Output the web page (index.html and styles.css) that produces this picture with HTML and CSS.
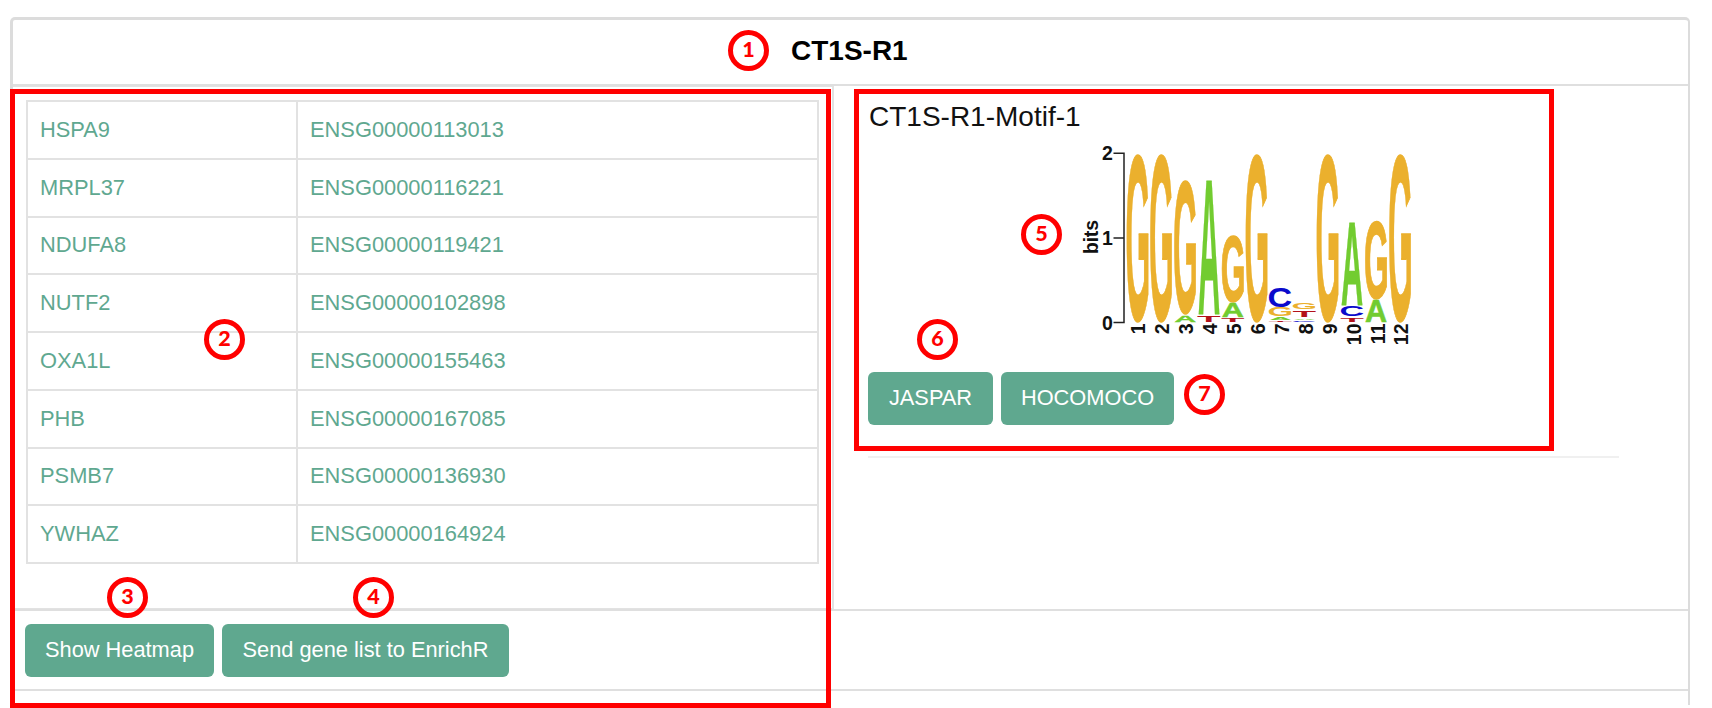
FILE: index.html
```html
<!DOCTYPE html>
<html lang="en">
<head>
<meta charset="utf-8">
<title>CT1S-R1</title>
<link rel="stylesheet" href="styles.css">
</head>
<body>
<main class="panel">
  <h1 class="panel-title"><span>CT1S-R1</span></h1>
  <div class="panel-body">
    <section class="genes">
      <table class="gene-table">
        <tr><td>HSPA9</td><td>ENSG00000113013</td></tr>
        <tr><td>MRPL37</td><td>ENSG00000116221</td></tr>
        <tr><td>NDUFA8</td><td>ENSG00000119421</td></tr>
        <tr><td>NUTF2</td><td>ENSG00000102898</td></tr>
        <tr><td>OXA1L</td><td>ENSG00000155463</td></tr>
        <tr><td>PHB</td><td>ENSG00000167085</td></tr>
        <tr><td>PSMB7</td><td>ENSG00000136930</td></tr>
        <tr><td>YWHAZ</td><td>ENSG00000164924</td></tr>
      </table>
    </section>
    <section class="motif">
      <h2 class="motif-title">CT1S-R1-Motif-1</h2>
      <svg class="logo" viewBox="1080 140 340 212" width="340" height="212">
        <path class="axis" d="M1113.5 153.2H1124V322.6H1113.5M1113.5 238H1124"/>
        <g class="ticks">
          <text x="1102" y="160">2</text><text x="1102" y="245">1</text><text x="1102" y="329.5">0</text>
          <text transform="translate(1098 254) rotate(-90)" textLength="34">bits</text>
        </g>
        <g class="letters">
          <text class="g" transform="translate(1125.6 319.8) scale(.318 2.355)">G</text>
          <text class="g" transform="translate(1149.1 319.8) scale(.318 2.355)">G</text>
          <text class="g" transform="translate(1172.9 312.4) scale(.318 1.87)">G</text>
          <text class="a" transform="translate(1174.2 322) scale(.306 .095)">A</text>
          <text class="a" transform="translate(1197.9 314) scale(.306 1.923)">A</text>
          <text class="t" transform="translate(1197 322) scale(.386 .098)">T</text>
          <text class="g" transform="translate(1220.8 300.8) scale(.318 .935)">G</text>
          <text class="a" transform="translate(1221.7 317) scale(.306 .193)">A</text>
          <text class="t" transform="translate(1220.9 322) scale(.386 .05)">T</text>
          <text class="g" transform="translate(1244.6 319.8) scale(.318 2.355)">G</text>
          <text class="c" transform="translate(1267.5 306.8) scale(.342 .278)">C</text>
          <text class="g thin" transform="translate(1267.6 316.2) scale(.328 .121)">G</text>
          <text class="a thin" transform="translate(1269.5 320) scale(.306 .04)">A</text>
          <text class="t" transform="translate(1268.5 321.7) scale(.386 .014)">T</text>
          <text class="g thin" transform="translate(1291.6 309.4) scale(.328 .088)">G</text>
          <text class="t" transform="translate(1292.5 317.3) scale(.386 .092)">T</text>
          <text class="a thin" transform="translate(1293.5 319.7) scale(.306 .015)">A</text>
          <text class="c" transform="translate(1291.5 322) scale(.342 .02)">C</text>
          <text class="g" transform="translate(1315.6 319.8) scale(.318 2.355)">G</text>
          <text class="a" transform="translate(1341 304.5) scale(.306 1.195)">A</text>
          <text class="c" transform="translate(1339.5 316.2) scale(.342 .145)">C</text>
          <text class="t" transform="translate(1340.2 322) scale(.386 .054)">T</text>
          <text class="g" transform="translate(1364.1 297.8) scale(.318 1.1)">G</text>
          <text class="a" transform="translate(1365 322) scale(.306 .308)">A</text>
          <text class="g" transform="translate(1388.1 319.8) scale(.318 2.355)">G</text>
        </g>
        <g class="positions">
          <text transform="translate(1145.4 323.5) rotate(-90)">1</text>
          <text transform="translate(1169.1 323.5) rotate(-90)">2</text>
          <text transform="translate(1193.1 323.5) rotate(-90)">3</text>
          <text transform="translate(1217.1 323.5) rotate(-90)">4</text>
          <text transform="translate(1241.1 323.5) rotate(-90)">5</text>
          <text transform="translate(1264.6 323.5) rotate(-90)">6</text>
          <text transform="translate(1288.6 323.5) rotate(-90)">7</text>
          <text transform="translate(1312.6 323.5) rotate(-90)">8</text>
          <text transform="translate(1336.6 323.5) rotate(-90)">9</text>
          <text transform="translate(1360.6 323.5) rotate(-90)">10</text>
          <text transform="translate(1384.6 323.5) rotate(-90)">11</text>
          <text transform="translate(1408.4 323.5) rotate(-90)">12</text>
        </g>
      </svg>
      <div class="buttons">
        <button class="btn btn-jaspar">JASPAR</button>
        <button class="btn btn-hocomoco">HOCOMOCO</button>
      </div>
      <hr class="rule">
    </section>
  </div>
  <div class="actions">
    <button class="btn btn-heatmap">Show Heatmap</button>
    <button class="btn btn-enrichr">Send gene list to EnrichR</button>
  </div>
</main>

<div class="frame frame-genes"></div>
<div class="frame frame-motif"></div>
<span class="mark mark-1">1</span>
<span class="mark mark-2">2</span>
<span class="mark mark-3">3</span>
<span class="mark mark-4">4</span>
<span class="mark mark-5">5</span>
<span class="mark mark-6">6</span>
<span class="mark mark-7">7</span>
</body>
</html>
```
FILE: styles.css
```css
* { box-sizing: border-box; }
body {
  margin: 0;
  height: 708px;
  padding: 17px 0 0 10px;
  position: relative;
  overflow: hidden;
  background: #fff;
  font-family: "Liberation Sans", Arial, sans-serif;
}
.panel {
  width: 1680px;
  height: 688px;
  border: solid #dcdcdc;
  border-width: 3px 2px 0 3px;
  border-radius: 5px 5px 0 0;
}
.panel-title {
  margin: 0;
  height: 66px;
  padding: 13px 0 0 778px;
  border-bottom: 2px solid #dfdfdf;
  font-size: 28px;
  line-height: 36px;
  color: #000;
}
.panel-body {
  display: grid;
  grid-template-columns: 821px 1fr;
  height: 525px;
  border-bottom: 2px solid #dfdfdf;
}
.genes {
  border: solid #e2e2e2;
  border-width: 1px 2px 1px 0;
  padding: 13px 0 0 13px;
}
.gene-table {
  width: 793px;
  height: 464px;
  border-collapse: collapse;
  table-layout: fixed;
  color: #5fa890;
  font-size: 21.85px;
}
.gene-table td {
  border: 2px solid #e2e2e2;
  padding: 0 0 0 12px;
}
.gene-table td:first-child { width: 270px; }
.motif { padding: 13px 0 0 34px; }
.motif-title {
  margin: 0 0 0 1px;
  font-size: 28px;
  font-weight: 400;
  line-height: 36px;
  color: #111;
}
.logo {
  display: block;
  margin: 5px 0 0 212px;
}
.axis { fill: none; stroke: #222; stroke-width: 1.5; }
.ticks { font-size: 19.5px; font-weight: 700; fill: #111; }
.letters { font-size: 100px; font-weight: 700; }
.positions { font-size: 19.5px; font-weight: 700; fill: #111; text-anchor: end; }
.g { fill: #ebb02d; stroke: #ebb02d; stroke-width: 1.2px; vector-effect: non-scaling-stroke; }
.a { fill: #72cc30; stroke: #72cc30; stroke-width: .6px; vector-effect: non-scaling-stroke; }
.thin { stroke: none; }
.t { fill: #b3111a; }
.c { fill: #0a0acc; }
.buttons { display: flex; gap: 8px; margin-top: 20px; }
.btn {
  height: 53px;
  padding: 0 0 2px;
  border: 0;
  border-radius: 6px;
  background: #5fa88f;
  color: #fff;
  font: 21.8px "Liberation Sans", Arial, sans-serif;
  white-space: nowrap;
}
.btn-jaspar { width: 125px; }
.btn-hocomoco { width: 173px; }
.btn-heatmap { width: 189px; }
.btn-enrichr { width: 287px; }
.rule {
  width: 751px;
  height: 2px;
  margin: 31px 0 0;
  border: 0;
  background: #f0f0f0;
}
.actions {
  display: flex;
  gap: 8px;
  height: 80px;
  padding: 13px 0 0 12px;
  border-bottom: 2px solid #dfdfdf;
}
.frame { position: absolute; border: 5px solid #f00; }
.frame-genes { left: 10px; top: 89px; width: 821px; height: 619px; }
.frame-motif { left: 854px; top: 89px; width: 700px; height: 362px; }
.mark {
  position: absolute;
  width: 41px;
  height: 41px;
  border: 5px solid #f00;
  border-radius: 50%;
  color: #f00;
  font: 900 21.5px/29px Lato, sans-serif;
  text-align: center;
}
.mark-1 { left: 728px; top: 30px; }
.mark-2 { left: 204px; top: 319px; }
.mark-3 { left: 107px; top: 577px; }
.mark-4 { left: 353px; top: 577px; }
.mark-5 { left: 1021px; top: 214px; }
.mark-6 { left: 917px; top: 319px; }
.mark-7 { left: 1184px; top: 374px; }
```
